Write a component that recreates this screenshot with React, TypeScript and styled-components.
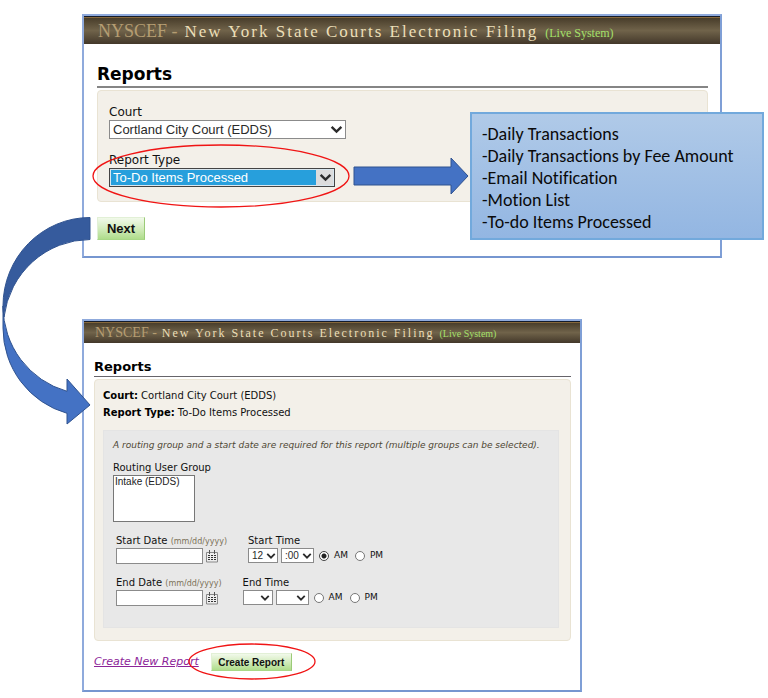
import React from "react";
import styled, { createGlobalStyle, css } from "styled-components";

const GlobalStyle = createGlobalStyle`
  *, *::before, *::after { box-sizing: border-box; }
  body {
    margin: 0;
    background: #fff;
    color: #111;
    font-family: "DejaVu Sans", Verdana, sans-serif;
  }
`;

const Page = styled.main`
  position: relative;
  display: flex;
  flex-direction: column;
  gap: 61px;
  padding: 14px 46px 6px 82px;
`;

const Window = styled.section<{ $small?: boolean }>`
  border: 2px solid #8faadc;
  border-right-color: #7f9fd6;
  border-bottom-color: #7696d0;
  margin-right: ${(p) => (p.$small ? "140px" : "0")};
`;

const Banner = styled.header<{ $small?: boolean }>`
  display: flex;
  align-items: baseline;
  white-space: nowrap;
  font-family: "Liberation Serif", "Times New Roman", serif;
  border-top: 1px solid #141c2c;
  box-shadow: inset 0 1px #86683c;
  background: linear-gradient(#453a28, #70634a 50%, #43382a);
  gap: ${(p) => (p.$small ? "5px" : "7px")};
  height: ${(p) => (p.$small ? "22px" : "28px")};
  line-height: ${(p) => (p.$small ? "22px" : "29px")};
  padding-left: ${(p) => (p.$small ? "11px" : "14px")};
`;

const Brand = styled.span<{ $small?: boolean }>`
  color: #b59d72;
  font-size: ${(p) => (p.$small ? "14px" : "18px")};
`;

const SystemName = styled.span<{ $small?: boolean }>`
  color: #ecdfb8;
  letter-spacing: 2px;
  font-size: ${(p) => (p.$small ? "12px" : "17px")};
`;

const Status = styled.span<{ $small?: boolean }>`
  color: #a5e06a;
  font-size: ${(p) => (p.$small ? "10px" : "12px")};
`;

const Content = styled.div<{ $small?: boolean }>`
  padding: ${(p) => (p.$small ? "15px 9px 19px 10px" : "18px 12px 16px 13px")};
`;

const Title = styled.h1<{ $small?: boolean }>`
  margin: 0 0 2px;
  color: #000;
  font-weight: bold;
  font-size: ${(p) => (p.$small ? "13px" : "17px")};
  line-height: ${(p) => (p.$small ? "18px" : "24px")};
  border-bottom: ${(p) => (p.$small ? "1px solid #66646a" : "2px solid #858585")};
`;

const Panel = styled.div<{ $small?: boolean }>`
  background: #f3f0e9;
  border: 1px solid #e9e3d3;
  border-radius: 4px;
  padding: ${(p) => (p.$small ? "7px 11px 12px 8px" : "13px 11px 14px")};
`;

const Field = styled.div`
  position: relative;
  & + & { margin-top: 13px; }
`;

const Label = styled.label<{ $small?: boolean }>`
  display: block;
  width: max-content;
  font-size: ${(p) => (p.$small ? "10px" : "12px")};
  line-height: ${(p) => (p.$small ? "14px" : "16px")};
`;

const Hint = styled.span`
  color: #7c7258;
  font-size: 8px;
  line-height: 8px;
`;

const SelectFrame = styled.span<{ $width: number; $active?: boolean; $small?: boolean }>`
  display: grid;
  grid-template-columns: 1fr ${(p) => (p.$small ? "13px" : "18px")};
  align-items: center;
  width: ${(p) => p.$width}px;
  height: ${(p) => (p.$small ? "15px" : "19px")};
  background: #fff;
  border: 1px solid #8b8b8b;
  ${(p) =>
    p.$active &&
    css`
      border-color: #444;
      background: linear-gradient(90deg, #279fdc calc(100% - 18px), #dcdcdc 0);
      box-shadow: inset 0 0 0 1px #d8e6ee;
    `}
  svg {
    grid-area: 1 / 2;
    justify-self: center;
    pointer-events: none;
  }
`;

const SelectBox = styled.select<{ $active?: boolean; $small?: boolean }>`
  grid-area: 1 / 1 / 2 / 3;
  appearance: none;
  width: 100%;
  height: 100%;
  margin: 0;
  padding: 0 3px;
  border: 0;
  background: none;
  color: ${(p) => (p.$active ? "#fff" : "#2a2a2a")};
  font-family: "Liberation Sans", Arial, sans-serif;
  font-size: ${(p) => (p.$small ? "10px" : "13px")};
`;

const ListBox = styled.select`
  display: block;
  width: 82px;
  height: 47px;
  padding: 0;
  border: 1px solid #777;
  border-radius: 0;
  background: #fff;
  color: #222;
  overflow: hidden;
  font-family: "Liberation Sans", Arial, sans-serif;
  font-size: 10px;
  option { padding: 0 1px; min-height: 12px; line-height: 12px; }
`;

const GreenButton = styled.button<{ $small?: boolean }>`
  border: 1px solid;
  border-color: #e2f0d6 #9bcb78 #a9d887 #e2f0d6;
  background: linear-gradient(#f1f9ea, #d3ecbd 50%, #afdd8b);
  color: #111;
  font-family: "Liberation Sans", Arial, sans-serif;
  font-weight: bold;
  font-size: ${(p) => (p.$small ? "10px" : "13px")};
  padding: 0;
  width: ${(p) => (p.$small ? "81px" : "48px")};
  height: ${(p) => (p.$small ? "18px" : "23px")};
`;

const Actions = styled.div<{ $small?: boolean }>`
  display: flex;
  align-items: center;
  gap: 12px;
  margin-top: ${(p) => (p.$small ? "12px" : "15px")};
`;

const TextLink = styled.a`
  color: #8c2498;
  font-style: italic;
  font-size: 11px;
  line-height: 18px;
`;

const Summary = styled.dl`
  margin: 0 0 9px;
  font-size: 10px;
  line-height: 17px;
`;

const SummaryLine = styled.div`
  display: flex;
  gap: 3px;
  dt { font-weight: bold; color: #000; }
  dd { margin: 0; }
`;

const Options = styled.div`
  background: #e8e8e8;
  border: 1px solid #e4e4e4;
  padding: 7px 9px 21px;
`;

const Note = styled.p`
  margin: 0 0 9px;
  color: #4e4733;
  font-style: italic;
  font-size: 9px;
  line-height: 14px;
  white-space: nowrap;
`;

const TimeRow = styled.div`
  display: flex;
  gap: 21px;
  padding-left: 3px;
  margin-top: 12px;
`;

const Controls = styled.div`
  display: flex;
  align-items: center;
  gap: 3px;
`;

const DateInput = styled.input`
  width: 87px;
  height: 16px;
  padding: 0 2px;
  border: 1px solid #8b8b8b;
  background: #fff;
  font: 10px "Liberation Sans", Arial, sans-serif;
`;

const IconButton = styled.button`
  display: flex;
  padding: 0;
  border: 0;
  background: none;
`;

const RadioLabel = styled.label`
  display: flex;
  align-items: center;
  gap: 5px;
  padding-left: 2px;
  margin-right: 2px;
  font-size: 9px;
  line-height: 15px;
`;

const Radio = styled.input`
  appearance: none;
  width: 10px;
  height: 10px;
  margin: 0;
  border: 1px solid #777;
  border-radius: 50%;
  background: #fff;
  &:checked {
    border-color: #444;
    background: radial-gradient(circle, #222 0 2px, #fff 3px);
  }
`;

const Callout = styled.div`
  position: absolute;
  top: -40px;
  left: 244px;
  z-index: 2;
  display: flex;
  align-items: center;
`;

const CalloutList = styled.ul`
  width: 294px;
  margin: 0;
  padding: 9px 10px 5px;
  list-style: none;
  border: 2px solid #72a9dc;
  background: linear-gradient(#b0cae8, #93b6e2);
  color: #0a0a0a;
  font-family: Carlito, Calibri, Lato, sans-serif;
  font-size: 18px;
  font-variant-ligatures: none;
  line-height: 22px;
  white-space: nowrap;
`;

const Ring = styled.svg<{ $top: number; $left: number }>`
  position: absolute;
  top: ${(p) => p.$top}px;
  left: ${(p) => p.$left}px;
  z-index: 1;
  pointer-events: none;
`;

const ButtonAnchor = styled.div`
  position: relative;
  display: flex;
`;

const FlowArrow = styled.svg`
  position: absolute;
  top: 215px;
  left: 0;
  z-index: 3;
  pointer-events: none;
`;

function Chevron({ size }: { size: number }) {
  return (
    <svg width={size} height={size} viewBox="0 0 12 12" aria-hidden="true">
      <path d="M1.5 3.5 6 8l4.5-4.5" fill="none" stroke="#2b2b2b" strokeWidth="2.2" />
    </svg>
  );
}

function CalendarIcon() {
  return (
    <svg width="12" height="13" viewBox="0 0 12 13" aria-hidden="true">
      <path d="M.5 2.5h11v9.5H.5z" fill="#eee" stroke="#888" />
      <path d="M3.5 0v4M8.5 0v4" stroke="#555" />
      <path d="M2 5.5h8M2 7.5h8M2 9.5h8" stroke="#333" strokeWidth="1.2" strokeDasharray="2 1" />
    </svg>
  );
}

function Oval({ width, height, top, left }: { width: number; height: number; top: number; left: number }) {
  return (
    <Ring $top={top} $left={left} width={width} height={height} aria-hidden="true">
      <ellipse
        cx={width / 2}
        cy={height / 2}
        rx={width / 2 - 1}
        ry={height / 2 - 1}
        fill="none"
        stroke="#f01414"
        strokeWidth="1.3"
      />
    </Ring>
  );
}

interface DropdownProps {
  id?: string;
  label?: string;
  width: number;
  options: string[];
  small?: boolean;
  active?: boolean;
}

function Dropdown({ id, label, width, options, small, active }: DropdownProps) {
  return (
    <SelectFrame $width={width} $small={small} $active={active}>
      <SelectBox id={id} aria-label={label} $small={small} $active={active}>
        {options.map((o) => (
          <option key={o}>{o}</option>
        ))}
      </SelectBox>
      <Chevron size={small ? 10 : 13} />
    </SelectFrame>
  );
}

function SystemBanner({ small }: { small?: boolean }) {
  return (
    <Banner $small={small}>
      <Brand $small={small}>NYSCEF -</Brand>
      <SystemName $small={small}>New York State Courts Electronic Filing</SystemName>
      <Status $small={small}>(Live System)</Status>
    </Banner>
  );
}

interface ScheduleProps {
  name: string;
  hour: string;
  minute: string;
  minuteWidth: number;
  period?: string;
}

function Schedule({ name, hour, minute, minuteWidth, period }: ScheduleProps) {
  const key = name.toLowerCase();
  return (
    <TimeRow>
      <div>
        <Label $small htmlFor={`${key}-date`}>
          {name} Date <Hint>(mm/dd/yyyy)</Hint>
        </Label>
        <Controls>
          <DateInput id={`${key}-date`} type="text" />
          <IconButton type="button" aria-label={`Pick ${key} date`}>
            <CalendarIcon />
          </IconButton>
        </Controls>
      </div>
      <div>
        <Label $small htmlFor={`${key}-hour`}>
          {name} Time
        </Label>
        <Controls>
          <Dropdown small id={`${key}-hour`} width={30} options={[hour]} />
          <Dropdown small label={`${name} minute`} width={minuteWidth} options={[minute]} />
          {["AM", "PM"].map((p) => (
            <RadioLabel key={p}>
              <Radio type="radio" name={`${key}-period`} defaultChecked={p === period} />
              {p}
            </RadioLabel>
          ))}
        </Controls>
      </div>
    </TimeRow>
  );
}

const reportTypes = [
  "Daily Transactions",
  "Daily Transactions by Fee Amount",
  "Email Notification",
  "Motion List",
  "To-do Items Processed",
];

export default function App() {
  return (
    <>
      <GlobalStyle />
      <Page>
        <Window>
          <SystemBanner />
          <Content>
            <Title>Reports</Title>
            <Panel>
              <Field>
                <Label htmlFor="court">Court</Label>
                <Dropdown id="court" width={237} options={["Cortland City Court (EDDS)"]} />
              </Field>
              <Field>
                <Label htmlFor="report-type">Report Type</Label>
                <Dropdown id="report-type" width={226} active options={["To-Do Items Processed"]} />
                <Oval top={-8} left={-17} width={258} height={64} />
                <Callout>
                  <svg width="117" height="38" viewBox="0 0 117 38" aria-hidden="true">
                    <path d="M1 10h97V1l17 18-17 18v-9H1z" fill="#4472c4" stroke="#2f528f" />
                  </svg>
                  <CalloutList>
                    {reportTypes.map((t) => (
                      <li key={t}>-{t}</li>
                    ))}
                  </CalloutList>
                </Callout>
              </Field>
            </Panel>
            <Actions>
              <GreenButton type="button">Next</GreenButton>
            </Actions>
          </Content>
        </Window>

        <Window $small>
          <SystemBanner small />
          <Content $small>
            <Title as="h2" $small>
              Reports
            </Title>
            <Panel $small>
              <Summary>
                <SummaryLine>
                  <dt>Court:</dt>
                  <dd>Cortland City Court (EDDS)</dd>
                </SummaryLine>
                <SummaryLine>
                  <dt>Report Type:</dt>
                  <dd>To-Do Items Processed</dd>
                </SummaryLine>
              </Summary>
              <Options>
                <Note>
                  A routing group and a start date are required for this report (multiple groups can be selected).
                </Note>
                <Label $small htmlFor="group">
                  Routing User Group
                </Label>
                <ListBox id="group" multiple size={4}>
                  <option>Intake (EDDS)</option>
                </ListBox>
                <Schedule name="Start" hour="12" minute=":00" minuteWidth={33} period="AM" />
                <Schedule name="End" hour="" minute="" minuteWidth={33} />
              </Options>
            </Panel>
            <Actions $small>
              <TextLink href="#new-report">Create New Report</TextLink>
              <ButtonAnchor>
                <GreenButton type="button" $small>
                  Create Report
                </GreenButton>
                <Oval top={-10} left={-23} width={128} height={37} />
              </ButtonAnchor>
            </Actions>
          </Content>
        </Window>

        <FlowArrow width="92" height="212" viewBox="0 215 92 212" aria-hidden="true">
          <path
            d="M3 306A87 88.5 0 0 0 67 391.3V379l23 26-23 19v-10.7A87 88.5 0 0 1 3 328z"
            fill="#4472c4"
            stroke="#2f528f"
          />
          <path
            d="M90 217.5A87 88.5 0 0 0 3 306Q3 312 4 317A87 88.5 0 0 1 90 239.5z"
            fill="#365b9d"
            stroke="#2f528f"
          />
        </FlowArrow>
      </Page>
    </>
  );
}
